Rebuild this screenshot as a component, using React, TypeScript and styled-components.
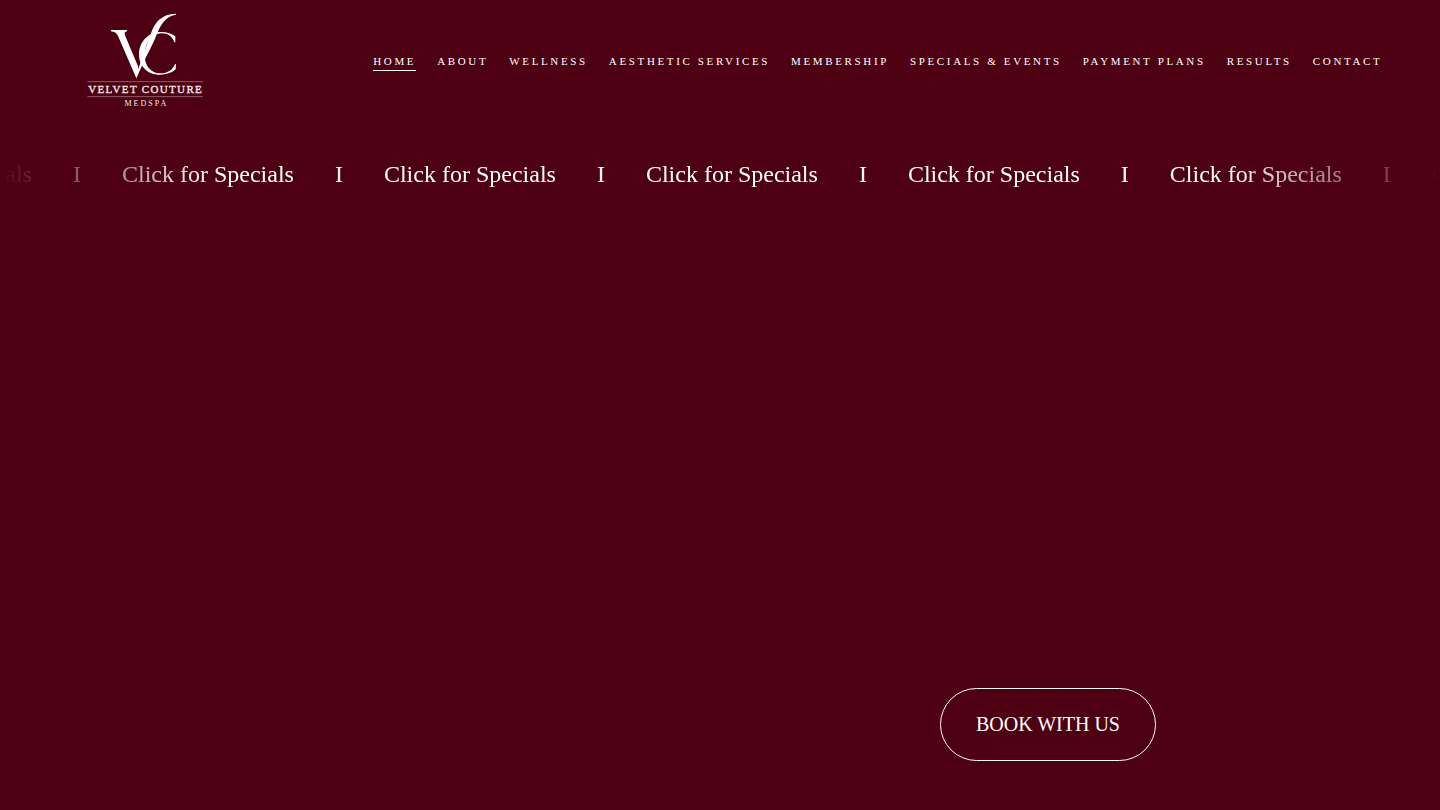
import React from 'react';
import styled, { createGlobalStyle } from 'styled-components';

const GlobalStyle = createGlobalStyle`
  *, *::before, *::after { box-sizing: border-box; }
  body {
    margin: 0;
    background: #4c0012;
    color: #ffffff;
    font-family: "Liberation Serif", "Times New Roman", serif;
  }
`;

const Page = styled.div`
  display: flex;
  flex-direction: column;
  min-height: 100vh;
  overflow-x: hidden;
`;

const Header = styled.header`
  display: flex;
  align-items: center;
  justify-content: space-between;
  min-height: 120px;
  padding: 0 4vw 0 87px;
`;

const LogoLink = styled.a`
  display: block;
  flex: none;
  color: inherit;
`;

const LogoDrawing = styled.svg`
  display: block;
  width: 116px;
  height: 94px;
`;

const Nav = styled.nav`
  display: flex;
  align-items: center;
  gap: 21px;
`;

const NavLink = styled.a<{ $active?: boolean }>`
  padding: 3px 0 1px;
  border-bottom: 1px solid ${(p) => (p.$active ? '#ffffff' : 'transparent')};
  color: inherit;
  font-size: 11px;
  line-height: 16px;
  letter-spacing: 0.24em;
  text-decoration: none;
  text-transform: uppercase;
  white-space: nowrap;
`;

const Marquee = styled.a`
  display: block;
  overflow: hidden;
  padding: 38px 0;
  color: inherit;
  text-decoration: none;
  mask-image: linear-gradient(to right, transparent, #000 15%, #000 85%, transparent);
`;

const MarqueeTrack = styled.div`
  display: flex;
  gap: 41px;
  margin-left: -140px;
  font-size: 24px;
  line-height: 32px;
  white-space: nowrap;
`;

const MarqueeItem = styled.span`
  flex: none;
`;

const Hero = styled.main`
  display: flex;
  flex: 1;
  align-items: flex-end;
  justify-content: flex-end;
  padding: 0 284px 49px 0;
`;

const BookButton = styled.button`
  padding: 24px 35px;
  border: 1px solid #ffffff;
  border-radius: 37px;
  background: transparent;
  color: inherit;
  font-family: inherit;
  font-size: 20px;
  line-height: 23px;
  cursor: pointer;
`;

const links = [
  'Home',
  'About',
  'Wellness',
  'Aesthetic Services',
  'Membership',
  'Specials & Events',
  'Payment Plans',
  'Results',
  'Contact',
];

const slogans = Array.from({ length: 6 }, () => ['Click for Specials', 'I'])
  .flat()
  .concat('Click for Specials');

function Logo() {
  return (
    <LogoDrawing viewBox="21 24 348 282" role="img" aria-label="Velvet Couture Medspa">
      <g fill="#ffffff">
        {/* Left arm with its serif, running down to the point */}
        <path d="M93 75 H141 V79 Q131 81 135 91 L174 184 L175 205 L169 220 L114 93 Q108 80 93 79 Z" />
        {/* Swash rising from the point */}
        <path d="M168 210 C184 168 200 120 214 82 C227 46 250 27 287 26 L288 29 C260 33 244 54 232 84 C220 118 200 150 187 180 C180 195 174 208 169 220 Z" />
        {/* Crescent */}
        <path d="M283 112 C278 94 262 84 242 85 C212 87 194 118 194 151 C194 183 213 205 240 205 C264 205 279 194 285 177 L288 178 L287 193 C275 204 259 209 240 209 C202 209 177 183 177 149 C177 111 204 81 243 81 C261 81 276 86 286 94 V112 Z" />
      </g>
      <path d="M22 230 H369 M22 275 H369" stroke="#b98a94" strokeWidth="2" />
      <g fill="#f3e6e8" stroke="#f3e6e8" textAnchor="middle" fontFamily="'Liberation Serif', serif">
        <text x="197" y="264" fontSize="33" letterSpacing="4" strokeWidth="1">
          VELVET COUTURE
        </text>
        <text x="199" y="303" fontSize="24" letterSpacing="6" strokeWidth="0">
          MEDSPA
        </text>
      </g>
    </LogoDrawing>
  );
}

export default function App() {
  return (
    <>
      <GlobalStyle />
      <Page>
        <Header>
          <LogoLink href="#home">
            <Logo />
          </LogoLink>
          <Nav aria-label="Main">
            {links.map((label, i) => (
              <NavLink key={label} href="#" $active={i === 0}>
                {label}
              </NavLink>
            ))}
          </Nav>
        </Header>
        <Marquee href="#specials">
          <MarqueeTrack>
            {slogans.map((text, i) => (
              <MarqueeItem key={i}>{text}</MarqueeItem>
            ))}
          </MarqueeTrack>
        </Marquee>
        <Hero>
          <BookButton type="button">BOOK WITH US</BookButton>
        </Hero>
      </Page>
    </>
  );
}
